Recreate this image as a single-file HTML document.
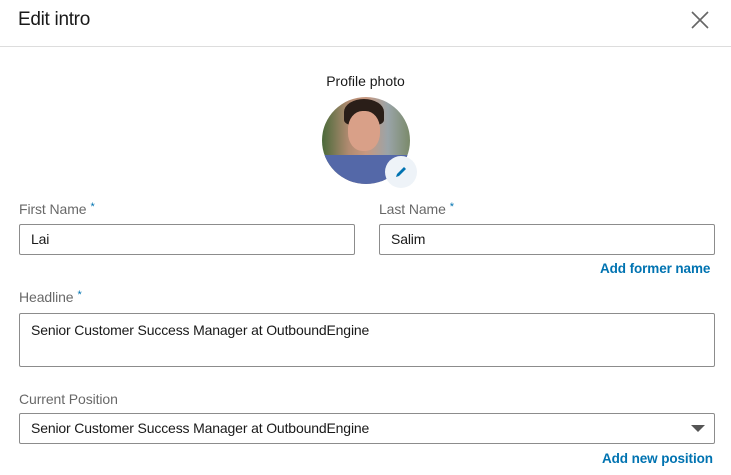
<!DOCTYPE html>
<html><head><style>
body{margin:0;width:731px;height:475px;overflow:hidden;background:#fff;font-family:"Liberation Sans",sans-serif;color:#000;position:relative}
.a{position:absolute}
.lbl{font-size:14px;color:rgba(0,0,0,.6);letter-spacing:-.1px}
.lbl b{color:#0073b1;font-weight:normal;font-size:11px;vertical-align:top;margin-left:4px}
.in{position:absolute;border:1px solid rgba(0,0,0,.45);border-radius:2px;box-sizing:border-box;font-size:14px;color:rgba(0,0,0,.9);padding-left:11px;letter-spacing:-.15px}
.lnk{font-size:13.5px;font-weight:bold;color:#0073b1;letter-spacing:-.1px}
</style></head><body>
<div class="a" style="left:0;top:0;width:731px;height:46px;border-bottom:1px solid #ddd;"></div>
<div class="a" style="left:18px;top:9px;font-size:19px;color:rgba(0,0,0,.9);letter-spacing:-.3px">Edit intro</div>
<svg class="a" style="left:691px;top:11px" width="18" height="18"><path d="M1 1L17 17M17 1L1 17" stroke="#666" stroke-width="1.6"/></svg>
<div class="a" style="left:0;width:731px;top:73px;text-align:center;font-size:14px;color:rgba(0,0,0,.9)">Profile photo</div>
<div class="a" style="left:322px;top:97px;width:88px;height:87px;border-radius:50%;overflow:hidden;background:linear-gradient(90deg,#4a6a3a 0%,#b08a70 30%,#c89880 50%,#9aa4a8 75%,#7a8a6a 100%)">
<div class="a" style="left:22px;top:2px;width:40px;height:26px;border-radius:50% 50% 20% 20%;background:#2a1e18"></div>
<div class="a" style="left:26px;top:14px;width:32px;height:40px;border-radius:45%;background:#d9a088"></div>
<div class="a" style="left:0;top:58px;width:88px;height:30px;background:#5468a8"></div>
</div>
<div class="a" style="left:385px;top:156px;width:32px;height:32px;border-radius:50%;background:#eef3f8"></div>
<svg class="a" style="left:394px;top:165px" width="14" height="14"><path d="M2 12L3 9L10 2L12 4L5 11Z" fill="#0073b1"/></svg>
<div class="a lbl" style="left:19px;top:201px">First Name<b>*</b></div>
<div class="in" style="left:19px;top:224px;width:336px;height:31px;line-height:29px">Lai</div>
<div class="a lbl" style="left:379px;top:201px">Last Name<b>*</b></div>
<div class="in" style="left:379px;top:224px;width:336px;height:31px;line-height:29px">Salim</div>
<div class="a lnk" style="left:600px;top:261px">Add former name</div>
<div class="a lbl" style="left:19px;top:289px">Headline<b>*</b></div>
<div class="in" style="left:19px;top:313px;width:696px;height:54px;padding-top:8px">Senior Customer Success Manager at OutboundEngine</div>
<div class="a lbl" style="left:19px;top:391px">Current Position</div>
<div class="in" style="left:19px;top:413px;width:696px;height:31px;line-height:29px">Senior Customer Success Manager at OutboundEngine</div>
<svg class="a" style="left:691px;top:425px" width="14" height="8"><path d="M0 0H14L7 7Z" fill="#555"/></svg>
<div class="a lnk" style="left:602px;top:451px">Add new position</div>
</body></html>
